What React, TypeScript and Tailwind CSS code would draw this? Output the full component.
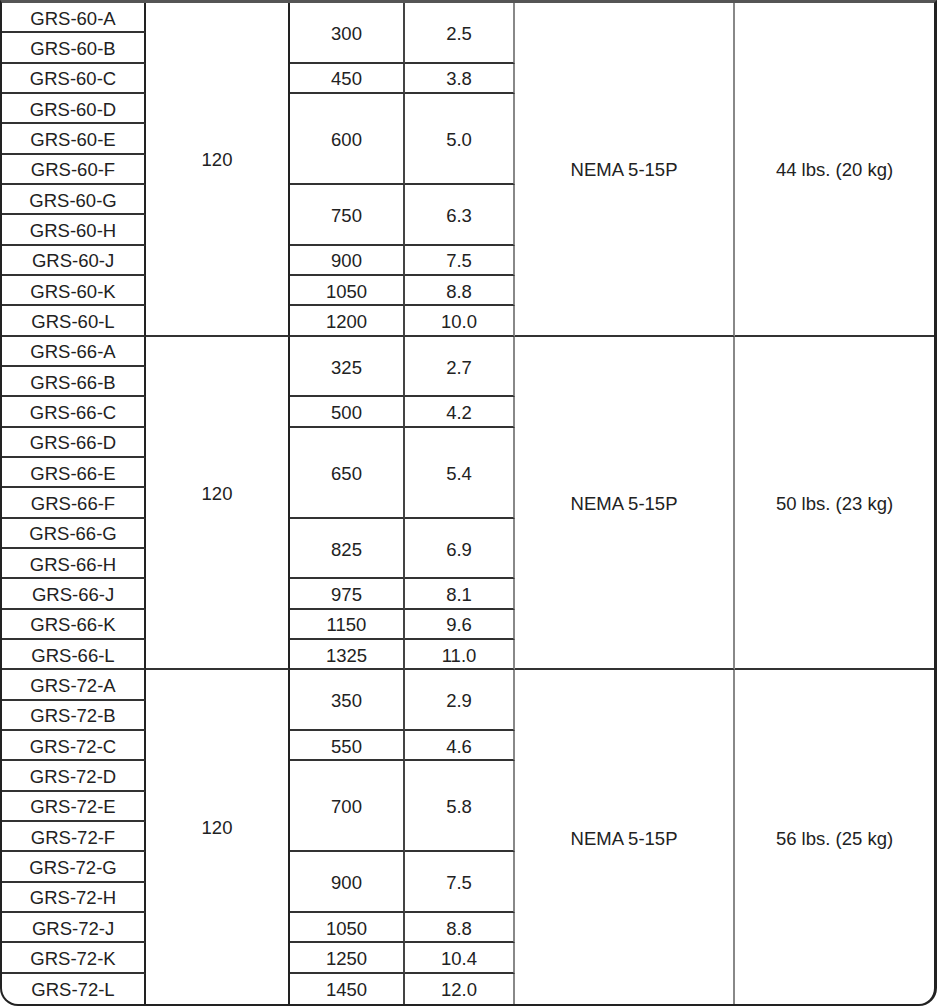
const SUFFIXES = ['A', 'B', 'C', 'D', 'E', 'F', 'G', 'H', 'J', 'K', 'L'];

interface Group {
  model: string;
  volts: string;
  plug: string;
  weight: string;
  // [watts, amps, rows spanned]
  ratings: [string, string, number][];
}

const GROUPS: Group[] = [
  {
    model: '60',
    volts: '120',
    plug: 'NEMA 5-15P',
    weight: '44 lbs. (20 kg)',
    ratings: [
      ['300', '2.5', 2],
      ['450', '3.8', 1],
      ['600', '5.0', 3],
      ['750', '6.3', 2],
      ['900', '7.5', 1],
      ['1050', '8.8', 1],
      ['1200', '10.0', 1],
    ],
  },
  {
    model: '66',
    volts: '120',
    plug: 'NEMA 5-15P',
    weight: '50 lbs. (23 kg)',
    ratings: [
      ['325', '2.7', 2],
      ['500', '4.2', 1],
      ['650', '5.4', 3],
      ['825', '6.9', 2],
      ['975', '8.1', 1],
      ['1150', '9.6', 1],
      ['1325', '11.0', 1],
    ],
  },
  {
    model: '72',
    volts: '120',
    plug: 'NEMA 5-15P',
    weight: '56 lbs. (25 kg)',
    ratings: [
      ['350', '2.9', 2],
      ['550', '4.6', 1],
      ['700', '5.8', 3],
      ['900', '7.5', 2],
      ['1050', '8.8', 1],
      ['1250', '10.4', 1],
      ['1450', '12.0', 1],
    ],
  },
];

const SPAN: Record<number, string> = {
  1: 'row-span-1',
  2: 'row-span-2',
  3: 'row-span-3',
};

const CELL = 'flex items-center justify-center pt-[3px]';

function GroupBlock({ group, last }: { group: Group; last: boolean }) {
  const bottom = 'border-b-2 border-b-[#333]';
  // which row each rating starts on
  const starts: number[] = [];
  let r = 0;
  group.ratings.forEach(([, , span]) => {
    starts.push(r);
    r += span;
  });

  const cells: JSX.Element[] = [];
  SUFFIXES.forEach((s, i) => {
    const isLastRow = i === SUFFIXES.length - 1;
    cells.push(
      <div
        key={`m-${s}`}
        className={`col-start-1 ${CELL} border-r-2 border-r-[#222] ${isLastRow && last ? '' : bottom}`}
      >
        GRS-{group.model}-{s}
      </div>
    );
    if (i === 0) {
      cells.push(
        <div
          key="volts"
          className={`col-start-2 row-span-11 ${CELL} pb-[21px] border-r-2 border-r-[#222] ${
            last ? '' : bottom
          }`}
        >
          {group.volts}
        </div>
      );
    }
    const idx = starts.indexOf(i);
    if (idx >= 0) {
      const [w, a, span] = group.ratings[idx];
      const endsGroup = i + span === SUFFIXES.length;
      const b = endsGroup && last ? '' : bottom;
      cells.push(
        <div key={`w-${s}`} className={`col-start-3 ${SPAN[span]} ${CELL} border-r-2 border-r-[#444] ${b}`}>
          {w}
        </div>,
        <div key={`a-${s}`} className={`col-start-4 ${SPAN[span]} ${CELL} border-r-2 border-r-[#888] ${b}`}>
          {a}
        </div>
      );
    }
    if (i === 0) {
      cells.push(
        <div
          key="plug"
          className={`col-start-5 row-span-11 ${CELL} border-r-2 border-r-[#888] ${last ? '' : bottom}`}
        >
          {group.plug}
        </div>,
        <div key="weight" className={`col-start-6 row-span-11 ${CELL} ${last ? '' : bottom}`}>
          {group.weight}
        </div>
      );
    }
  });

  return (
    <div className="grid grid-cols-[144px_144px_115px_110px_220px_199px] grid-rows-[repeat(11,30.33px)]">
      {cells}
    </div>
  );
}

export default function App() {
  return (
    <div className="w-[940px] h-[1008px] bg-white font-['Liberation_Sans',Arial,sans-serif] text-[18.5px] text-[#222]">
      <div className="w-[937px] border-t-[3px] border-t-[#555] border-l-2 border-l-[#222] border-r-[3px] border-r-[#222] border-b-2 border-b-[#222] rounded-b-[18px] overflow-hidden">
        {GROUPS.map((g, i) => (
          <GroupBlock key={g.model} group={g} last={i === GROUPS.length - 1} />
        ))}
      </div>
    </div>
  );
}
